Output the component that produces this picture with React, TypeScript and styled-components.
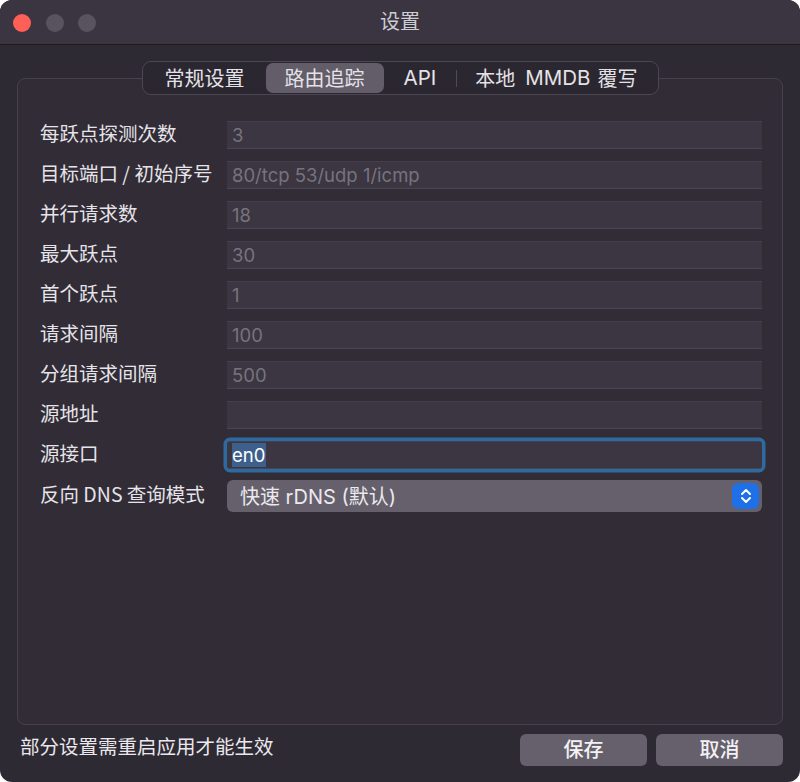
import React from "react";
import styled, { createGlobalStyle } from "styled-components";

const Global = createGlobalStyle`
  html, body { margin: 0; padding: 0; background: #ffffff; }
  body { font-family: Inter, "Noto Sans CJK SC", sans-serif; }
  * { box-sizing: border-box; }
`;

const Window = styled.div`
  width: 800px;
  height: 782px;
  border-radius: 12px;
  overflow: hidden;
  background: #2e2a33;
  display: flex;
  flex-direction: column;
  font-family: Inter, "Noto Sans CJK SC", sans-serif;
`;

const TitleBar = styled.div`
  height: 45px;
  flex: none;
  background: #3a3541;
  border-bottom: 1px solid #1c1920;
  display: grid;
  grid-template-columns: 1fr auto 1fr;
  align-items: center;
`;

const Lights = styled.div`
  display: flex;
  gap: 14.5px;
  padding-left: 13px;
  padding-top: 1px;
`;

const Light = styled.span<{ $color: string }>`
  width: 18px;
  height: 18px;
  border-radius: 50%;
  background: ${(p) => p.$color};
`;

const Title = styled.div`
  font-family: "Noto Sans CJK SC", sans-serif;
  font-size: 20px;
  color: #cfcdd3;
  margin-top: -3px;
`;

const Body = styled.div`
  flex: 1;
  display: flex;
  flex-direction: column;
  padding: 16px 17px 0 17px;
`;

const TabBar = styled.div`
  align-self: center;
  position: relative;
  z-index: 1;
  display: flex;
  align-items: center;
  height: 34px;
  margin-bottom: -17px;
  padding: 0 1px;
  border: 1px solid #4b4652;
  border-radius: 9px;
  background: #2b2730;
`;

const Tab = styled.div<{ $active?: boolean; $sep?: boolean; $pad: number }>`
  position: relative;
  height: 30px;
  display: flex;
  align-items: center;
  padding: 0 ${(p) => p.$pad}px;
  border-radius: 7px;
  background: ${(p) => (p.$active ? "#625d69" : "transparent")};
  color: #e4e2e7;
  font-family: "Noto Sans CJK SC", sans-serif;
  font-size: 20px;
  line-height: 1;
  white-space: nowrap;
  &::before {
    content: "";
    display: ${(p) => (p.$sep ? "block" : "none")};
    position: absolute;
    left: 0;
    top: 7px;
    width: 1px;
    height: 17px;
    background: #4f4a56;
  }
`;

const Latin = styled.span<{ $gap?: string }>`
  font-family: Inter, "Noto Sans CJK SC", sans-serif;
  font-size: 20.5px;
  margin: ${(p) => p.$gap || "0"};
`;

const Group = styled.div`
  height: 647px;
  border: 1px solid #46414c;
  border-radius: 8px;
  background: #312c36;
  padding: 42px 20px 0 22px;
  display: flex;
  flex-direction: column;
  gap: 12px;
`;

const Row = styled.div`
  display: grid;
  grid-template-columns: 187px 1fr;
  align-items: center;
`;

const Label = styled.div`
  font-family: "Noto Sans CJK SC", sans-serif;
  font-size: 19.5px;
  color: #e6e4e9;
  line-height: 28px;
  margin-top: -5px;
  white-space: nowrap;
`;

const Field = styled.div<{ $focus?: boolean }>`
  height: 28px;
  background: #3b3641;
  border-top: 1px solid #45404b;
  border-bottom: 1px solid #4a4550;
  border-radius: ${(p) => (p.$focus ? "3px" : "0")};
  display: flex;
  align-items: center;
  padding-left: 5px;
  font-family: Inter, "Noto Sans CJK SC", sans-serif;
  font-size: 18.5px;
  color: ${(p) => (p.$focus ? "#ffffff" : "#77737d")};
  box-shadow: ${(p) => (p.$focus ? "0 0 0 3.5px #2c6aa0" : "none")};
`;

const Selected = styled.span`
  background: #3d5f8c;
  color: #ffffff;
  line-height: 24px;
  padding-right: 1px;
`;

const Select = styled.div`
  height: 32px;
  margin-top: -1px;
  background: #65606b;
  border-radius: 6px;
  display: flex;
  align-items: center;
  justify-content: space-between;
  padding: 0 3px 0 13px;
  font-family: Inter, "Noto Sans CJK SC", sans-serif;
  font-size: 20px;
  color: #ebe9ee;
`;

const SelectText = styled.span`
  margin-top: -2px;
  white-space: pre;
`;

const Stepper = styled.div`
  width: 27px;
  height: 26px;
  border-radius: 6px;
  background: #1f6fe6;
  display: flex;
  align-items: center;
  justify-content: center;
`;

const Footer = styled.div`
  flex: 1;
  display: flex;
  align-items: flex-start;
  justify-content: space-between;
  padding: 9px 0 0 3px;
`;

const Note = styled.div`
  font-family: "Noto Sans CJK SC", sans-serif;
  font-size: 19.5px;
  color: #eae8ed;
  margin-top: -3px;
`;

const Buttons = styled.div`
  display: flex;
  gap: 9px;
`;

const Button = styled.button`
  width: 127px;
  height: 32px;
  border: none;
  border-radius: 6px;
  background: #65606b;
  color: #f2f1f4;
  font-family: "Noto Sans CJK SC", sans-serif;
  font-size: 20px;
  font-weight: 500;
  padding: 0 0 3px 0;
  display: flex;
  align-items: center;
  justify-content: center;
`;

const rows: { label: string; value: string }[] = [
  { label: "每跃点探测次数", value: "3" },
  { label: "目标端口 / 初始序号", value: "80/tcp 53/udp 1/icmp" },
  { label: "并行请求数", value: "18" },
  { label: "最大跃点", value: "30" },
  { label: "首个跃点", value: "1" },
  { label: "请求间隔", value: "100" },
  { label: "分组请求间隔", value: "500" },
  { label: "源地址", value: "" },
];

export default function App() {
  return (
    <>
      <Global />
      <Window>
        <TitleBar>
          <Lights>
            <Light $color="#fe5f57" />
            <Light $color="#58545e" />
            <Light $color="#58545e" />
          </Lights>
          <Title>设置</Title>
          <div />
        </TitleBar>
        <Body>
          <TabBar>
            <Tab $pad={21}>常规设置</Tab>
            <Tab $active $pad={19}>路由追踪</Tab>
            <Tab $pad={20}>
              <Latin>API</Latin>
            </Tab>
            <Tab $sep $pad={19}>
              本地<Latin $gap="0 7px 0 10px">MMDB</Latin>覆写
            </Tab>
          </TabBar>
          <Group>
            {rows.map((r) => (
              <Row key={r.label}>
                <Label>{r.label}</Label>
                <Field>{r.value}</Field>
              </Row>
            ))}
            <Row>
              <Label>源接口</Label>
              <Field $focus>
                <Selected>en0</Selected>
              </Field>
            </Row>
            <Row>
              <Label>反向 DNS 查询模式</Label>
              <Select>
                <SelectText>快速 rDNS (默认)</SelectText>
                <Stepper>
                  <svg width="14" height="20" viewBox="0 0 14 20" fill="none">
                    <path d="M3 8 L7 4 L11 8" stroke="#fff" strokeWidth="2" strokeLinecap="round" strokeLinejoin="round" />
                    <path d="M3 12 L7 16 L11 12" stroke="#fff" strokeWidth="2" strokeLinecap="round" strokeLinejoin="round" />
                  </svg>
                </Stepper>
              </Select>
            </Row>
          </Group>
          <Footer>
            <Note>部分设置需重启应用才能生效</Note>
            <Buttons>
              <Button>保存</Button>
              <Button>取消</Button>
            </Buttons>
          </Footer>
        </Body>
      </Window>
    </>
  );
}
